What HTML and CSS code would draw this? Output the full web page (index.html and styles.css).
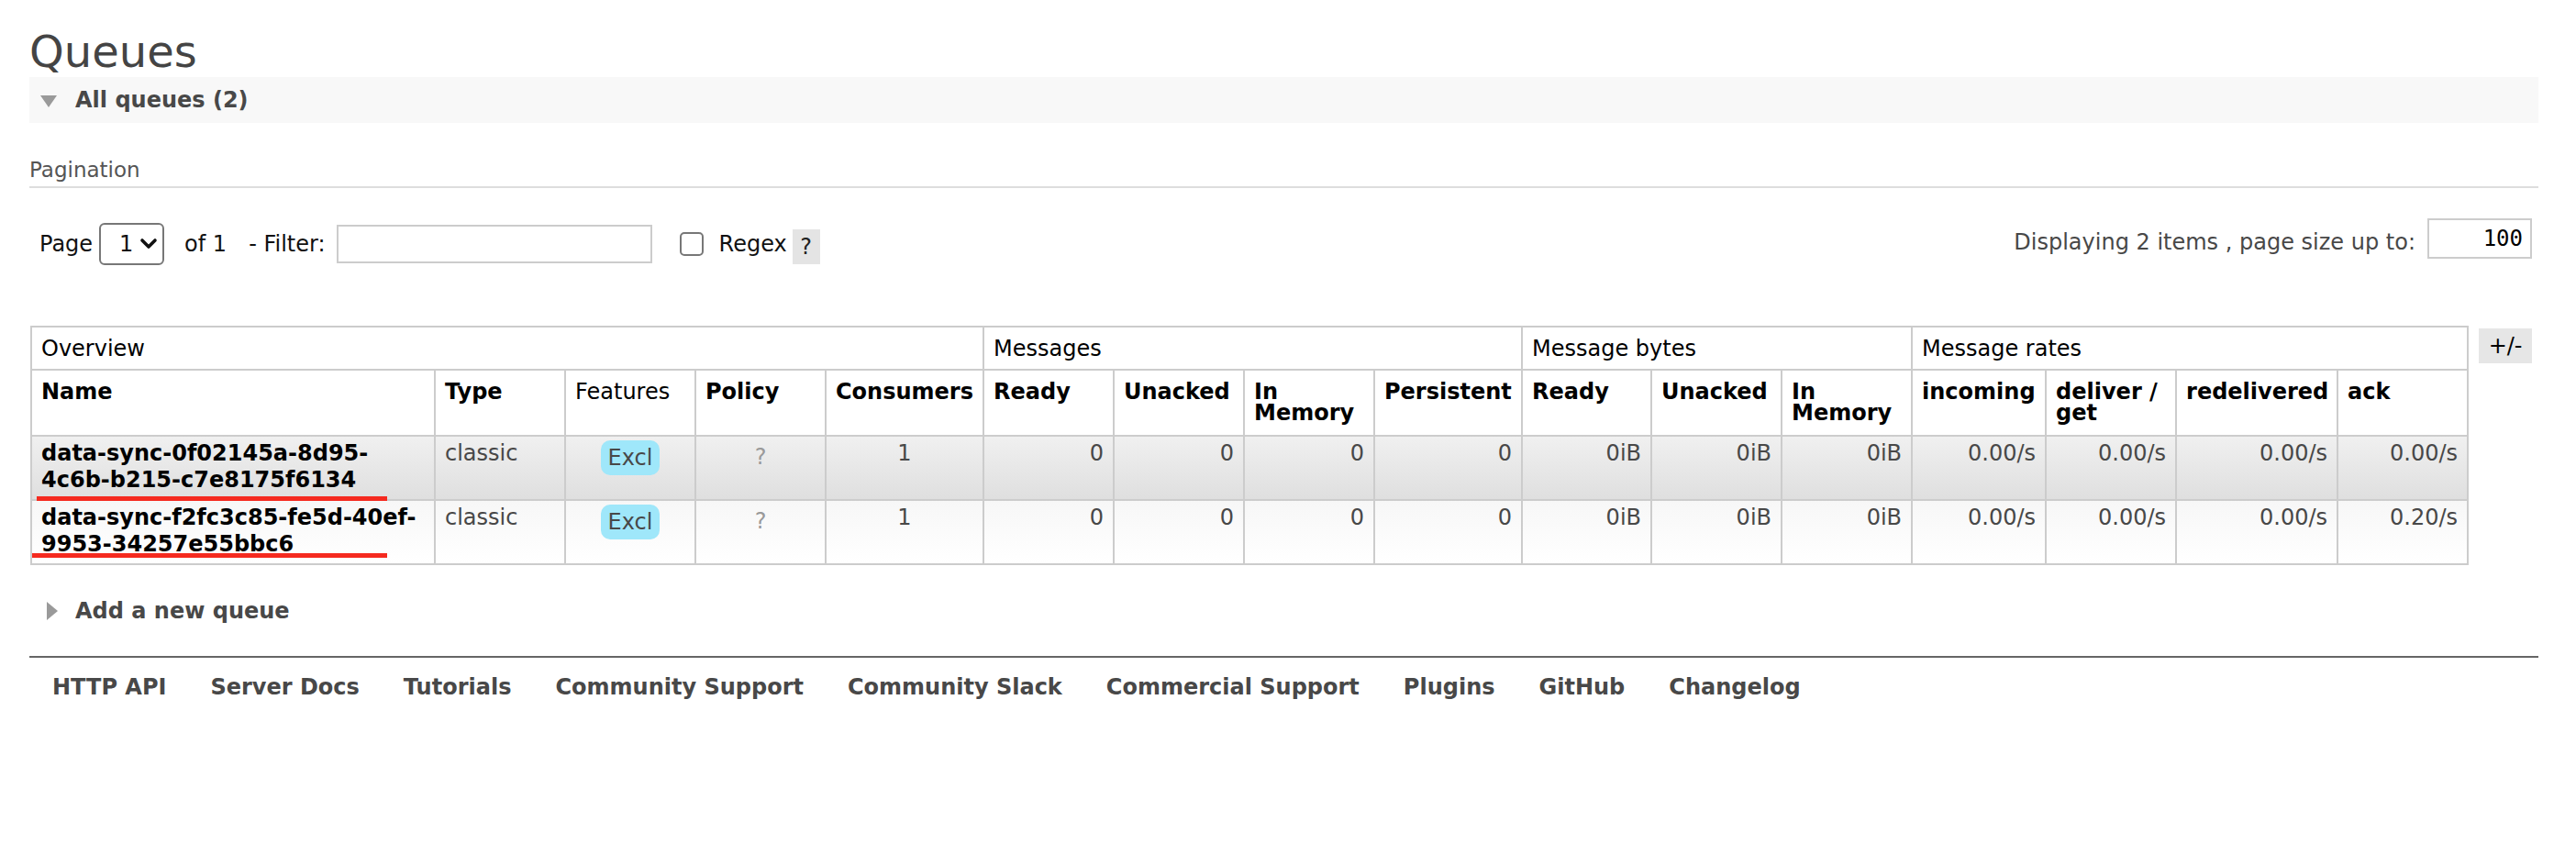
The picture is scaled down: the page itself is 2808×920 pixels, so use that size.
FILE: index.html
```html
<!DOCTYPE html>
<html>
<head>
<meta charset="utf-8">
<title>Queues</title>
<link rel="stylesheet" href="styles.css">
</head>
<body>
<div class="page">
  <h1 class="title">Queues</h1>
  <div class="section-bar">
    <span class="tri-down"></span>
    <span class="section-title">All queues (2)</span>
  </div>
  <h3 class="sub">Pagination</h3>
  <div class="pager">
    <div class="pager-left">
      <span class="lbl">Page</span>
      <span class="select"><span class="select-val">1</span><svg class="chev" width="20" height="14" viewBox="0 0 20 14"><polyline points="3,3 10,10 17,3" fill="none" stroke="#111" stroke-width="3.6" stroke-linecap="round" stroke-linejoin="round"/></svg></span>
      <span class="lbl of">of 1</span>
      <span class="lbl filter">- Filter:</span>
      <input class="filter-input" type="text">
      <span class="checkbox"></span>
      <span class="lbl regex">Regex</span>
      <span class="help">?</span>
    </div>
    <div class="pager-right">
      <span class="disp">Displaying 2 items , page size up to:</span>
      <input class="size-input" type="text" value="100">
    </div>
  </div>

  <div class="table-wrap">
    <table class="list">
      <colgroup>
        <col class="c-name"><col class="c-142"><col class="c-142"><col class="c-142"><col class="c-cons">
        <col class="c-142"><col class="c-142"><col class="c-142"><col class="c-pers">
        <col class="c-141"><col class="c-142"><col class="c-142">
        <col class="c-inc"><col class="c-142"><col class="c-redel"><col class="c-142">
      </colgroup>
      <thead>
        <tr class="group">
          <th colspan="5">Overview</th>
          <th colspan="4">Messages</th>
          <th colspan="3">Message bytes</th>
          <th colspan="4">Message rates</th>
        </tr>
        <tr class="head">
          <th>Name</th>
          <th>Type</th>
          <th class="plain">Features</th>
          <th>Policy</th>
          <th>Consumers</th>
          <th>Ready</th>
          <th>Unacked</th>
          <th>In Memory</th>
          <th>Persistent</th>
          <th>Ready</th>
          <th>Unacked</th>
          <th>In Memory</th>
          <th>incoming</th>
          <th>deliver / get</th>
          <th>redelivered</th>
          <th>ack</th>
        </tr>
      </thead>
      <tbody>
        <tr class="alt1">
          <td class="name">data-sync-0f02145a-8d95-4c6b-b215-c7e8175f6134<span class="mark mark1"></span></td>
          <td>classic</td>
          <td class="center"><span class="excl">Excl</span></td>
          <td class="center"><span class="policy-q">?</span></td>
          <td class="center">1</td>
          <td class="num">0</td>
          <td class="num">0</td>
          <td class="num">0</td>
          <td class="num">0</td>
          <td class="num">0iB</td>
          <td class="num">0iB</td>
          <td class="num">0iB</td>
          <td class="num">0.00/s</td>
          <td class="num">0.00/s</td>
          <td class="num">0.00/s</td>
          <td class="num">0.00/s</td>
        </tr>
        <tr class="alt2">
          <td class="name">data-sync-f2fc3c85-fe5d-40ef-9953-34257e55bbc6<span class="mark mark2"></span></td>
          <td>classic</td>
          <td class="center"><span class="excl">Excl</span></td>
          <td class="center"><span class="policy-q">?</span></td>
          <td class="center">1</td>
          <td class="num">0</td>
          <td class="num">0</td>
          <td class="num">0</td>
          <td class="num">0</td>
          <td class="num">0iB</td>
          <td class="num">0iB</td>
          <td class="num">0iB</td>
          <td class="num">0.00/s</td>
          <td class="num">0.00/s</td>
          <td class="num">0.00/s</td>
          <td class="num">0.20/s</td>
        </tr>
      </tbody>
    </table>
    <span class="toggle">+/-</span>
  </div>

  <div class="add-queue">
    <span class="tri-right"></span>
    <span class="section-title">Add a new queue</span>
  </div>

  <div class="footer">
    <span class="flink">HTTP API</span>
    <span class="flink">Server Docs</span>
    <span class="flink">Tutorials</span>
    <span class="flink">Community Support</span>
    <span class="flink">Community Slack</span>
    <span class="flink">Commercial Support</span>
    <span class="flink">Plugins</span>
    <span class="flink">GitHub</span>
    <span class="flink">Changelog</span>
  </div>
</div>
</body>
</html>
```

FILE: styles.css
```css
html, body {
  margin: 0;
  padding: 0;
  background: #fff;
}

body {
  font-family: "DejaVu Sans", Verdana, sans-serif;
  font-size: 24px;
  color: #484848;
}

.page {
  padding: 28px 41px 0 32px;
}

.title {
  margin: 0;
  font-size: 48px;
  line-height: 56px;
  font-weight: normal;
  color: #444;
}

.section-bar {
  height: 50px;
  background: #f8f8f8;
  display: flex;
  align-items: center;
  padding-left: 12px;
}

.tri-down {
  width: 0;
  height: 0;
  border-left: 9px solid transparent;
  border-right: 9px solid transparent;
  border-top: 13px solid #9a9a9a;
  margin-right: 20px;
  margin-top: 2px;
}

.section-title {
  font-weight: bold;
  font-size: 24px;
  line-height: 50px;
  color: #484848;
}

.sub {
  margin: 37px 0 0;
  font-size: 23px;
  line-height: 28px;
  font-weight: normal;
  color: #555;
  padding-bottom: 4px;
  border-bottom: 2px solid #ddd;
}

.pager {
  display: flex;
  justify-content: space-between;
  align-items: flex-start;
  margin-top: 33px;
  padding: 0 7px 0 11px;
}

.pager-left {
  display: flex;
  align-items: center;
  height: 46px;
  margin-top: 5px;
  color: #111;
  font-size: 24px;
  line-height: 28px;
}

.select {
  margin-left: 7px;
  width: 71px;
  height: 46px;
  box-sizing: border-box;
  border: 2px solid #777;
  border-radius: 6px;
  display: flex;
  align-items: center;
  padding-left: 20px;
  background: #fff;
}

.select-val {
  color: #111;
}

.chev {
  margin-left: 7px;
}

.of {
  margin-left: 22px;
}

.filter {
  margin-left: 24px;
}

.filter-input {
  margin: 0 0 0 12px;
  width: 344px;
  height: 42px;
  box-sizing: border-box;
  border: 2px solid #ccc;
  padding: 0 6px;
  background: #fff;
  font-family: "DejaVu Sans", sans-serif;
  font-size: 24px;
  outline: none;
}

.checkbox {
  margin-left: 30px;
  width: 26px;
  height: 26px;
  box-sizing: border-box;
  border: 2px solid #777;
  border-radius: 5px;
  background: #fff;
}

.regex {
  margin-left: 17px;
}

.help {
  margin-left: 6px;
  margin-top: 6px;
  width: 30px;
  height: 38px;
  background: #e4e4e4;
  display: flex;
  align-items: center;
  justify-content: center;
  color: #222;
}

.pager-right {
  display: flex;
  align-items: flex-start;
}

.disp {
  margin-top: 12px;
  font-size: 24px;
  line-height: 28px;
  color: #484848;
}

.size-input {
  margin: 0 0 0 13px;
  width: 114px;
  height: 44px;
  box-sizing: border-box;
  border: 2px solid #ccc;
  padding: 0 8px;
  text-align: right;
  font-family: "DejaVu Sans Mono", "Liberation Mono", monospace;
  font-size: 24px;
  color: #000;
  background: #fff;
  outline: none;
}

.table-wrap {
  display: flex;
  align-items: flex-start;
  margin-top: 66px;
  padding-left: 1px;
}

.list {
  border-collapse: collapse;
  table-layout: fixed;
  width: 2656px;
}

.c-name { width: 440px; }
.c-142 { width: 142px; }
.c-141 { width: 141px; }
.c-cons { width: 172px; }
.c-pers { width: 161px; }
.c-inc { width: 146px; }
.c-redel { width: 176px; }

.list th,
.list td {
  border: 2px solid #ccc;
  font-size: 24px;
  vertical-align: top;
  text-align: left;
}

.list tr.group th {
  font-weight: normal;
  color: #000;
  line-height: 23px;
  padding: 12px 10px 10px;
  background: #fff;
}

.list tr.head th {
  font-weight: bold;
  color: #000;
  line-height: 23px;
  padding: 12px 10px 12px;
  background: #fff;
}

.list tr.head th.plain {
  font-weight: normal;
}

.list td {
  line-height: 29px;
  padding: 4px 10px 6px;
  color: #484848;
}

.list tr.alt1 td {
  background: linear-gradient(#f0f0f0, #dfdfdf);
}

.list tr.alt2 td {
  background: linear-gradient(#f7f7f7, #ffffff);
}

.list td.name {
  position: relative;
  font-weight: bold;
  color: #000;
}

.list td.num {
  text-align: right;
}

.list td.center {
  text-align: center;
}

.excl {
  display: inline-block;
  vertical-align: top;
  background: #9fe7fa;
  border-radius: 10px;
  padding: 5px 8px;
  line-height: 28px;
  color: #484848;
}

.policy-q {
  color: #9a9a9a;
  vertical-align: -4px;
}

.mark {
  position: absolute;
  height: 5px;
  background: #f52a1f;
}

.mark1 {
  left: 5px;
  width: 382px;
  top: 65px;
}

.mark2 {
  left: 0;
  width: 387px;
  top: 57px;
}

.toggle {
  margin-left: 11px;
  margin-top: 3px;
  width: 58px;
  height: 38px;
  background: #e6e6e6;
  display: flex;
  align-items: center;
  justify-content: center;
  color: #000;
  font-size: 24px;
}

.add-queue {
  margin-top: 25px;
  height: 50px;
  display: flex;
  align-items: center;
  padding-left: 19px;
}

.tri-right {
  width: 0;
  height: 0;
  border-top: 10px solid transparent;
  border-bottom: 10px solid transparent;
  border-left: 12px solid #9a9a9a;
  margin-right: 19px;
}

.footer {
  margin-top: 24px;
  border-top: 2px solid #666;
  padding: 18px 0 0 25px;
  display: flex;
  gap: 48px;
}

.flink {
  font-weight: bold;
  font-size: 24px;
  line-height: 28px;
  color: #484848;
}
```
